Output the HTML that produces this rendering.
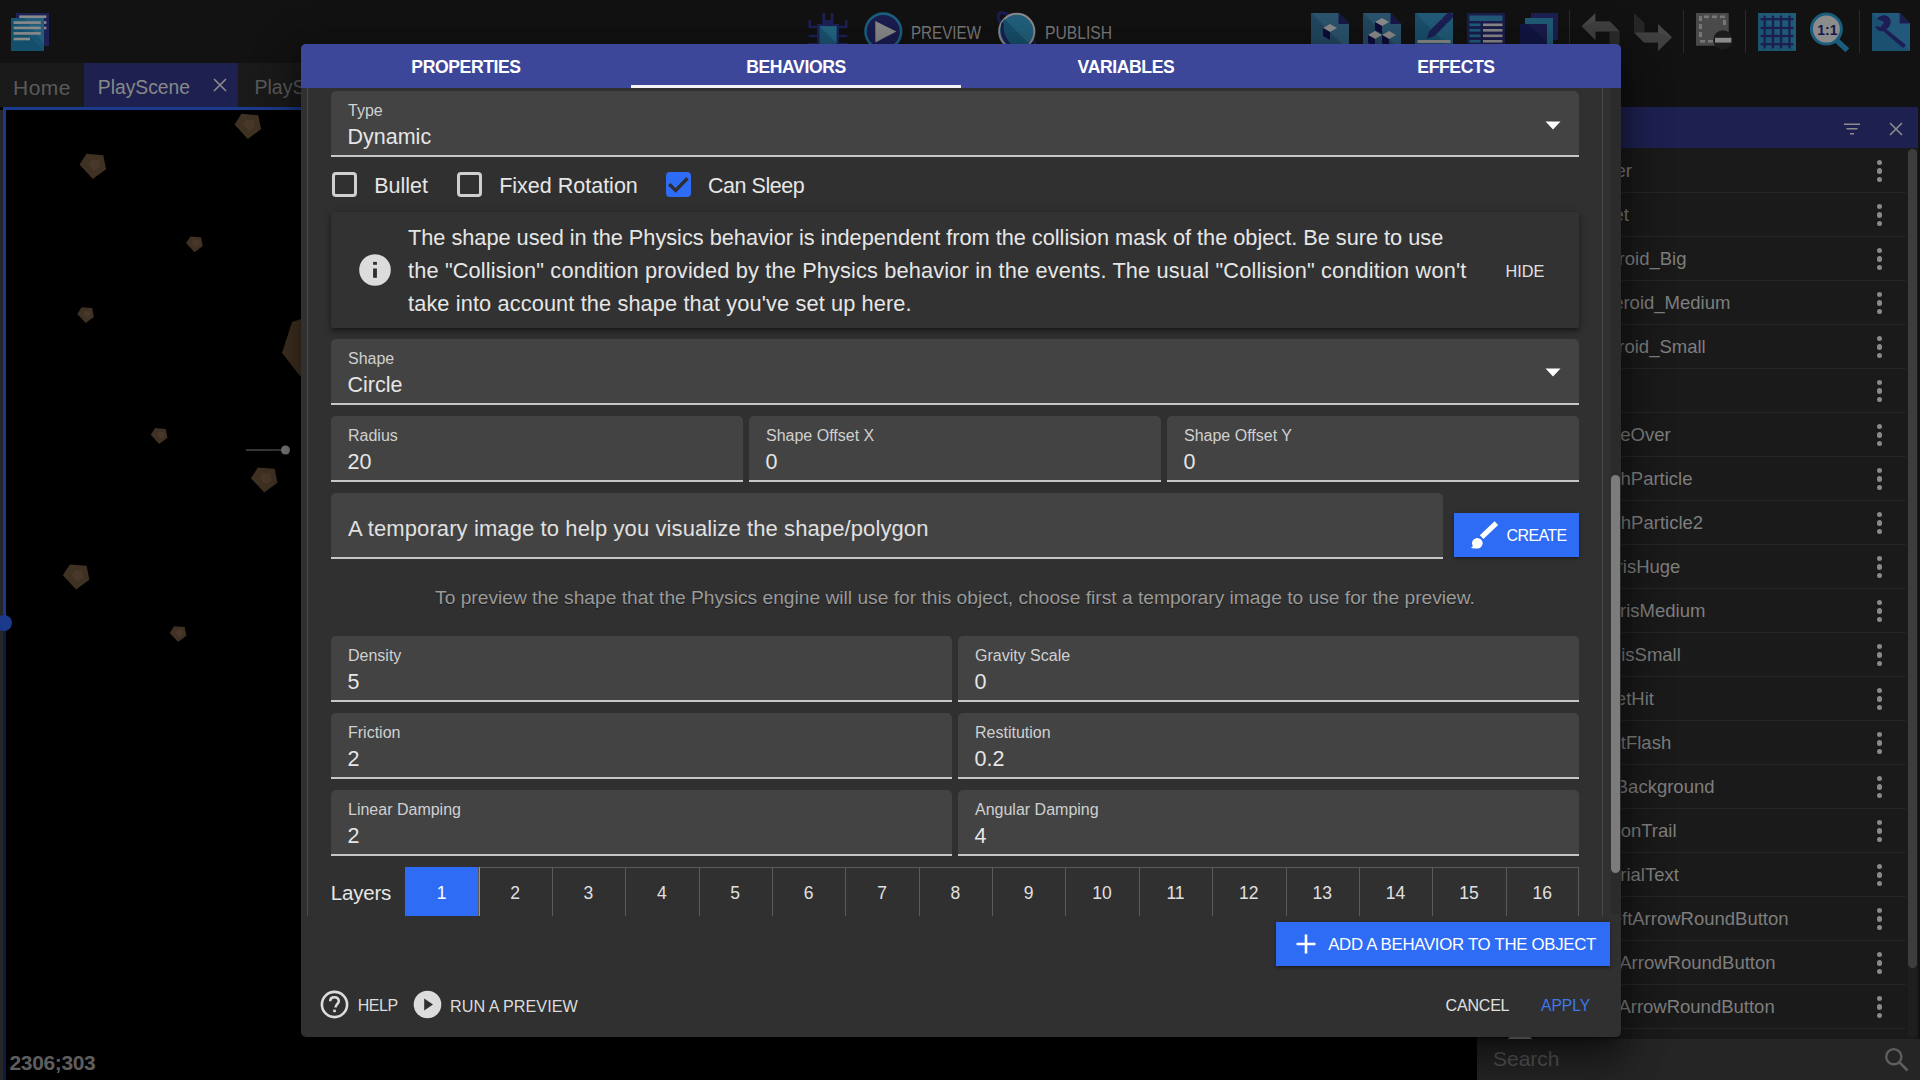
<!DOCTYPE html>
<html><head><meta charset="utf-8">
<style>
*{box-sizing:border-box;margin:0;padding:0}
html,body{width:1920px;height:1080px;overflow:hidden;background:#121212;font-family:"Liberation Sans",sans-serif}
.a{position:absolute}
.t{position:absolute;white-space:nowrap;line-height:1}
#dlg{background:#303030;border-radius:5px;overflow:hidden;box-shadow:0 11px 15px -7px rgba(0,0,0,.4),0 24px 38px 3px rgba(0,0,0,.28),0 9px 46px 8px rgba(0,0,0,.24)}
.fld{position:absolute;background:#434343;border-radius:5px 5px 0 0;border-bottom:2px solid #c6c6c6}
.btnb{position:absolute;background:#2f6cf5;box-shadow:0 1px 5px rgba(0,0,0,.2),0 2px 2px rgba(0,0,0,.14),0 3px 1px -2px rgba(0,0,0,.12)}
.cb{position:absolute;width:25px;height:25px;border:3px solid #cfcfcf;border-radius:4px}
</style></head><body>
<div class="a" style="left:0;top:0;width:1920px;height:63px;background:#121212"></div>
<svg class="a" style="left:0;top:0" width="1920" height="63" viewBox="0 0 1920 63">
 <!-- logo -->
 <rect x="16" y="13" width="33" height="33" fill="#1e2156"/>
 <rect x="19.2" y="15.4" width="27.2" height="2.6" fill="#8a8a8a"/>
 <rect x="44" y="21.2" width="2.4" height="2.6" fill="#8a8a8a"/>
 <rect x="44" y="26.7" width="2.4" height="2.6" fill="#8a8a8a"/>
 <rect x="11" y="18" width="33" height="33" fill="#175573"/>
 <polygon points="24,18 44,18 44,45" fill="#235f7c"/>
 <polygon points="11,18 44,51 11,51" fill="#134f6c"/>
 <rect x="13.6" y="21.3" width="27.2" height="2.6" fill="#8a8a8a"/>
 <rect x="13.6" y="26.6" width="27.2" height="2.6" fill="#8a8a8a"/>
 <rect x="13.6" y="32.1" width="27.2" height="2.6" fill="#8a8a8a"/>
 <rect x="13.6" y="37.7" width="16.4" height="2.6" fill="#8a8a8a"/>
 <!-- bug -->
 <g fill="#1d2258">
  <rect x="822.5" y="13" width="2.5" height="10"/><rect x="830.8" y="13" width="2.5" height="10"/>
  <rect x="822.5" y="20" width="10.8" height="6"/>
  <rect x="817" y="24" width="22" height="22"/>
  <rect x="808.5" y="25.8" width="10" height="2.4"/><rect x="837.5" y="25.8" width="10" height="2.4"/>
  <rect x="808.5" y="20" width="2.4" height="8"/><rect x="845.1" y="20" width="2.4" height="8"/>
  <rect x="808.5" y="34.8" width="10" height="2.4"/><rect x="837.5" y="34.8" width="10" height="2.4"/>
  <rect x="808.5" y="43" width="10" height="2.4"/><rect x="837.5" y="43" width="10" height="2.4"/>
 </g>
 <rect x="819.5" y="26.2" width="17" height="20" fill="#1b5572"/>
 <polygon points="819.5,26.2 836.5,26.2 836.5,43" fill="#246683"/>
 <!-- preview -->
 <circle cx="883.3" cy="31.4" r="17.8" fill="#1a1d4f" stroke="#1b6080" stroke-width="2.6"/>
 <polygon points="875.3,21 896.4,31.4 875.3,42.5" fill="#8a8a8a"/>
 <polygon points="886,36.2 896.4,31.4 875.3,42.5" fill="#6a6a70"/>
 <text x="911" y="38.75" font-family="Liberation Sans" font-size="17.6" fill="#7a7a7a" textLength="70" lengthAdjust="spacingAndGlyphs">PREVIEW</text>
 <!-- publish -->
 <ellipse cx="1016.8" cy="31.4" rx="25" ry="8" transform="rotate(45 1016.8 31.4)" fill="none" stroke="#1b1c55" stroke-width="3"/>
 <circle cx="1016.8" cy="31.4" r="17.6" fill="#22607c" stroke="#8a8a8a" stroke-width="2"/>
 <path d="M1004.4 19 L1029.2 43.8 A17.6 17.6 0 0 1 1004.4 19 Z" fill="#17506a"/>
 <path d="M1004 24 C1002 30 1006 40 1012 45 L1009 46 C1002 41 999 30 1002 22 Z" fill="#1b1c55"/>
 <text x="1045" y="38.75" font-family="Liberation Sans" font-size="17.6" fill="#7a7a7a" textLength="67" lengthAdjust="spacingAndGlyphs">PUBLISH</text>
 <!-- object icons -->
 <g id="pg1">
  <polygon points="1311,13 1338.5,13 1349,24 1349,51 1311,51" fill="#2b546e"/>
  <polygon points="1311,13 1349,51 1311,51" fill="#22475f"/>
  <polygon points="1338.5,13 1349,24 1338.5,24" fill="#16164a"/>
  <polygon points="1323,28 1330,24 1337,28 1330,32" fill="#8c8c8c"/>
  <polygon points="1323,28 1330,32 1330,40 1323,36" fill="#0e0d3c"/>
 </g>
 <polygon points="1363,13 1390.5,13 1401,24 1401,51 1363,51" fill="#2b546e"/>
 <polygon points="1363,13 1401,51 1363,51" fill="#22475f"/>
 <polygon points="1390.5,13 1401,24 1390.5,24" fill="#16164a"/>
 <polygon points="1375,22 1382,18 1389,22 1382,26" fill="#8c8c8c"/>
 <polygon points="1375,22 1382,26 1382,34 1375,30" fill="#0e0d3c"/>
 <polygon points="1368,35 1375,31 1382,35 1375,39" fill="#8c8c8c"/>
 <polygon points="1368,35 1375,39 1375,47 1368,43" fill="#0e0d3c"/>
 <polygon points="1382,35 1389,31 1396,35 1389,39" fill="#8c8c8c"/>
 <polygon points="1382,35 1389,39 1389,47 1382,43" fill="#0e0d3c"/>
 <!-- edit icon -->
 <rect x="1415" y="13" width="38" height="38" fill="#215b78"/>
 <polygon points="1415,13 1453,51 1415,51" fill="#1a4f6c"/>
 <path d="M1431.5 34 L1443.5 22" stroke="#1c1f55" stroke-width="7"/><path d="M1445.5 20 L1449.5 16" stroke="#1c1f55" stroke-width="7" stroke-linecap="round"/><path d="M1429 31.5 L1434 36.5 L1427 38.5 Z" fill="#1c1f55"/>
 <rect x="1417.5" y="40" width="33" height="3" fill="#8a8a8a"/>
 <!-- events sheet icon -->
 <rect x="1467" y="13" width="38" height="38" fill="#1b1d4e"/>
 <rect x="1469.5" y="15.5" width="33" height="5.5" fill="#225a77"/>
 <g fill="#1e607b"><rect x="1469.5" y="23.5" width="11" height="2.6"/><rect x="1469.5" y="29" width="11" height="2.6"/><rect x="1469.5" y="34.5" width="11" height="2.6"/><rect x="1469.5" y="40" width="11" height="2.6"/></g>
 <g fill="#8a8a8a"><rect x="1483" y="23.5" width="19.5" height="2.6"/><rect x="1483" y="29" width="19.5" height="2.6"/><rect x="1483" y="34.5" width="19.5" height="2.6"/><rect x="1483" y="40" width="19.5" height="2.6"/></g>
 <!-- layers icon -->
 <rect x="1531" y="13" width="27" height="27" fill="#1d1f52"/>
 <rect x="1525" y="18" width="28" height="30" fill="#1f5b77"/>
 <rect x="1520" y="24" width="27" height="24" fill="#121643"/>
 <polygon points="1528,24 1547,24 1547,42" fill="#1a1c4c"/>
 <!-- separators -->
 <rect x="1569" y="10" width="1" height="43" fill="#2a2a2a"/>
 <rect x="1683" y="10" width="1" height="43" fill="#2a2a2a"/>
 <rect x="1745" y="10" width="1" height="43" fill="#2a2a2a"/>
 <rect x="1859" y="10" width="1" height="43" fill="#2a2a2a"/>
 <!-- undo -->
 <polygon points="1581.6,26.3 1595.4,13 1595.4,21.4 1610,21.4 1619.7,31.6 1595.4,31.6 1595.4,40" fill="#474747"/>
 <polygon points="1609.5,31.6 1619.7,31.6 1619.7,44 1609.5,44" fill="#2b2b2b"/>
 <polygon points="1581.6,26.3 1595.4,40 1595.4,31.6 1619.7,31.6 1610,21.4 1595,21.4" fill="#3a3a3a" opacity="0.55"/>
 <!-- redo -->
 <polygon points="1634,13 1644.5,23 1644.5,32.5 1634,32.5" fill="#262626"/>
 <polygon points="1634,32.5 1658,32.5 1658,24 1672,37.3 1658,51 1658,42.6 1644,42.6" fill="#474747"/>
 <polygon points="1658,42.6 1644,42.6 1634,32.5 1658,32.5 1672,37.3 1658,51" fill="#3a3a3a" opacity="0.5"/>
 <!-- mask -->
 <rect x="1696" y="13" width="32.7" height="32.7" fill="#4a4a4a"/>
 <g fill="#777"><rect x="1699" y="16" width="3" height="5"/><rect x="1704" y="15.5" width="5" height="2.6"/><rect x="1712" y="15.5" width="5" height="2.6"/><rect x="1720" y="15.5" width="5" height="2.6"/>
 <rect x="1699" y="24" width="3" height="5"/><rect x="1699" y="32" width="3" height="5"/><rect x="1700" y="40" width="5" height="2.6"/><rect x="1708" y="40" width="5" height="2.6"/><rect x="1723" y="20" width="3" height="5"/></g>
 <circle cx="1722.9" cy="40" r="9.7" fill="#1c1c1c"/>
 <rect x="1715" y="37.8" width="16.3" height="4.8" fill="#8a8a8a"/>
 <!-- grid -->
 <rect x="1758" y="13" width="38" height="38" fill="#1f5b77"/>
 <polygon points="1758,13 1796,51 1758,51" fill="#1b5470"/>
 <g fill="#1c1e52"><rect x="1763.5" y="15.6" width="2.3" height="32.8"/><rect x="1771.8" y="15.6" width="2.3" height="32.8"/><rect x="1779.9" y="15.6" width="2.3" height="32.8"/><rect x="1788.3" y="15.6" width="2.3" height="32.8"/>
 <rect x="1760.6" y="18" width="32.8" height="2.3"/><rect x="1760.6" y="26.8" width="32.8" height="2.3"/><rect x="1760.6" y="34.9" width="32.8" height="2.3"/><rect x="1760.6" y="43.1" width="32.8" height="2.3"/></g>
 <!-- zoom 1:1 -->
 <path d="M1834 38 L1847.4 50.2" stroke="#1b5d7c" stroke-width="5.5"/>
 <circle cx="1826.4" cy="29.1" r="15" fill="#8c8c8c" stroke="#1b5d7c" stroke-width="3"/>
 <text x="1817.3" y="34.5" font-family="Liberation Sans" font-weight="bold" font-size="14" fill="#15174a">1:1</text>
 <!-- wrench page -->
 <polygon points="1872,13 1899.7,13 1910,23.6 1910,51 1872,51" fill="#22587a"/>
 <polygon points="1872,13 1910,51 1872,51" fill="#1c5070"/>
 <polygon points="1899.7,13 1910,23.6 1899.7,23.6" fill="#1c1e52"/>
 <path d="M1877 19 C1880 14 1888 14 1890 19 C1892 24 1889 28 1886 29 L1906 45 L1903 48 L1883 31 C1879 32 1876 29 1875 26 L1881 27 L1884 22 Z" fill="#1c1e55"/>
</svg>
<div class="a" style="left:0;top:63px;width:1477px;height:45px;background:#1a1a1a"></div>
<div class="a" style="left:84px;top:63px;width:154px;height:44px;background:#1e2150"></div>
<div class="t" style="left:13.0px;top:76.72px;font-size:21px;color:#5a5a5a;letter-spacing:0.5px">Home</div>
<div class="t" style="left:97.8px;top:78.16px;font-size:19.3px;color:#888888;">PlayScene</div>
<div class="t" style="left:254.5px;top:77.99px;font-size:19.5px;color:#5a5a5a;">PlayScene2</div>
<svg class="a" style="left:212px;top:77px" width="16" height="16" viewBox="0 0 16 16"><path d="M2 2L14 14M14 2L2 14" stroke="#8c8c8c" stroke-width="1.6"/></svg>
<div class="a" style="left:0;top:107px;width:1477px;height:973px;background:#000"></div>
<div class="a" style="left:0;top:110px;width:3px;height:970px;background:#262626"></div>
<div class="a" style="left:3px;top:107px;width:1474px;height:3px;background:#1b3a8c"></div>
<div class="a" style="left:3px;top:107px;width:3px;height:516px;background:#1b3a8c"></div>
<div class="a" style="left:3px;top:623px;width:3px;height:457px;background:#0d1b3f"></div>
<div class="a" style="left:-4px;top:615px;width:16px;height:16px;border-radius:50%;background:#1b3a8c"></div>
<svg class="a" style="left:0;top:0" width="310" height="1080" viewBox="0 0 310 1080">
 <defs><filter id="bl" x="-20%" y="-20%" width="140%" height="140%"><feGaussianBlur stdDeviation="0.7"/></filter></defs>
 <g filter="url(#bl)">
  <polygon points="241.5,113.8 258.3,115.2 261.1,129.2 247.8,139.0 234.5,124.6" fill="#3f3024"/>
  <polygon points="246.4,119.6 253.9,120.3 255.2,126.6 249.2,131.0 243.2,124.5" fill="#4a392b"/>
  <polygon points="86.5,153.8 103.3,155.2 106.1,169.2 92.8,179.0 79.5,164.6" fill="#3f3024"/>
  <polygon points="91.4,159.6 98.9,160.3 100.2,166.6 94.2,171.0 88.2,164.5" fill="#4a392b"/>
  <polygon points="190.5,236.4 201.1,237.2 202.8,246.0 194.5,252.2 186.1,243.1" fill="#3f3024"/>
  <polygon points="194.0,240.0 198.7,240.4 199.5,244.4 195.8,247.1 192.0,243.1" fill="#4a392b"/>
  <polygon points="81.6,307.3 92.2,308.1 93.9,316.9 85.6,323.1 77.2,314.0" fill="#3f3024"/>
  <polygon points="85.1,310.9 89.8,311.3 90.6,315.3 86.9,318.0 83.1,314.0" fill="#4a392b"/>
  <polygon points="155.2,428.1 165.8,428.9 167.5,437.7 159.2,443.9 150.8,434.8" fill="#3f3024"/>
  <polygon points="158.7,431.7 163.4,432.1 164.2,436.1 160.5,438.8 156.7,434.8" fill="#4a392b"/>
  <polygon points="257.9,467.4 274.7,468.8 277.5,482.8 264.2,492.6 250.9,478.2" fill="#3f3024"/>
  <polygon points="262.8,473.2 270.3,473.9 271.6,480.2 265.6,484.6 259.6,478.1" fill="#4a392b"/>
  <polygon points="69.8,564.4 86.6,565.8 89.4,579.8 76.1,589.6 62.8,575.2" fill="#3f3024"/>
  <polygon points="74.7,570.2 82.2,570.9 83.5,577.2 77.5,581.6 71.5,575.1" fill="#4a392b"/>
  <polygon points="174.1,626.2 184.7,627.0 186.4,635.8 178.1,642.0 169.7,632.9" fill="#3f3024"/>
  <polygon points="177.6,629.8 182.3,630.2 183.1,634.2 179.4,636.9 175.6,632.9" fill="#4a392b"/>
  <polygon points="292,322 310,316 310,376 300,376 282,353" fill="#3f3024"/>
 </g>
 <line x1="246" y1="450" x2="284" y2="450" stroke="#6f6f6f" stroke-width="1.2"/>
 <circle cx="285.5" cy="450" r="4.5" fill="#7a7a7a"/>
</svg>
<div class="t" style="left:9.5px;top:1051.8px;font-size:21px;font-weight:bold;color:#5e5e5e;letter-spacing:-0.35px">2306;303</div>
<div class="a" style="left:1477px;top:107px;width:441px;height:41px;background:#1e2150"></div>
<div class="a" style="left:1477px;top:148px;width:441px;height:891px;background:#1a1a1a"></div>
<div class="a" style="left:1918px;top:107px;width:2px;height:973px;background:#121212"></div>
<div class="a" style="left:1502px;top:1034px;width:36px;height:36px;border-radius:50%;background:#9a9a9a"></div>
<div class="a" style="left:1477px;top:1039px;width:443px;height:41px;background:#252525"></div>
<svg class="a" style="left:1843px;top:122px" width="18" height="14" viewBox="0 0 18 14"><path d="M1 2.3H17M3.5 6.8H14.5M7 11.7H11" stroke="#8c8c8c" stroke-width="1.6"/></svg>
<svg class="a" style="left:1889px;top:122px" width="14" height="14" viewBox="0 0 14 14"><path d="M1 1L13 13M13 1L1 13" stroke="#8c8c8c" stroke-width="1.6"/></svg>
<div class="a" style="left:1876.7px;top:159.9px;width:5.4px;height:5.4px;border-radius:50%;background:#8a8a8a"></div>
<div class="a" style="left:1876.7px;top:168.2px;width:5.4px;height:5.4px;border-radius:50%;background:#8a8a8a"></div>
<div class="a" style="left:1876.7px;top:176.5px;width:5.4px;height:5.4px;border-radius:50%;background:#8a8a8a"></div>
<div class="a" style="left:1620px;top:192px;width:286px;height:1px;background:#262626"></div>
<div class="a" style="left:1876.7px;top:203.9px;width:5.4px;height:5.4px;border-radius:50%;background:#8a8a8a"></div>
<div class="a" style="left:1876.7px;top:212.2px;width:5.4px;height:5.4px;border-radius:50%;background:#8a8a8a"></div>
<div class="a" style="left:1876.7px;top:220.5px;width:5.4px;height:5.4px;border-radius:50%;background:#8a8a8a"></div>
<div class="a" style="left:1620px;top:236px;width:286px;height:1px;background:#262626"></div>
<div class="a" style="left:1876.7px;top:247.9px;width:5.4px;height:5.4px;border-radius:50%;background:#8a8a8a"></div>
<div class="a" style="left:1876.7px;top:256.2px;width:5.4px;height:5.4px;border-radius:50%;background:#8a8a8a"></div>
<div class="a" style="left:1876.7px;top:264.5px;width:5.4px;height:5.4px;border-radius:50%;background:#8a8a8a"></div>
<div class="a" style="left:1620px;top:280px;width:286px;height:1px;background:#262626"></div>
<div class="a" style="left:1876.7px;top:291.9px;width:5.4px;height:5.4px;border-radius:50%;background:#8a8a8a"></div>
<div class="a" style="left:1876.7px;top:300.2px;width:5.4px;height:5.4px;border-radius:50%;background:#8a8a8a"></div>
<div class="a" style="left:1876.7px;top:308.5px;width:5.4px;height:5.4px;border-radius:50%;background:#8a8a8a"></div>
<div class="a" style="left:1620px;top:324px;width:286px;height:1px;background:#262626"></div>
<div class="a" style="left:1876.7px;top:335.9px;width:5.4px;height:5.4px;border-radius:50%;background:#8a8a8a"></div>
<div class="a" style="left:1876.7px;top:344.2px;width:5.4px;height:5.4px;border-radius:50%;background:#8a8a8a"></div>
<div class="a" style="left:1876.7px;top:352.5px;width:5.4px;height:5.4px;border-radius:50%;background:#8a8a8a"></div>
<div class="a" style="left:1620px;top:368px;width:286px;height:1px;background:#262626"></div>
<div class="a" style="left:1876.7px;top:379.9px;width:5.4px;height:5.4px;border-radius:50%;background:#8a8a8a"></div>
<div class="a" style="left:1876.7px;top:388.2px;width:5.4px;height:5.4px;border-radius:50%;background:#8a8a8a"></div>
<div class="a" style="left:1876.7px;top:396.5px;width:5.4px;height:5.4px;border-radius:50%;background:#8a8a8a"></div>
<div class="a" style="left:1620px;top:412px;width:286px;height:1px;background:#262626"></div>
<div class="a" style="left:1876.7px;top:423.9px;width:5.4px;height:5.4px;border-radius:50%;background:#8a8a8a"></div>
<div class="a" style="left:1876.7px;top:432.2px;width:5.4px;height:5.4px;border-radius:50%;background:#8a8a8a"></div>
<div class="a" style="left:1876.7px;top:440.5px;width:5.4px;height:5.4px;border-radius:50%;background:#8a8a8a"></div>
<div class="a" style="left:1620px;top:456px;width:286px;height:1px;background:#262626"></div>
<div class="a" style="left:1876.7px;top:467.9px;width:5.4px;height:5.4px;border-radius:50%;background:#8a8a8a"></div>
<div class="a" style="left:1876.7px;top:476.2px;width:5.4px;height:5.4px;border-radius:50%;background:#8a8a8a"></div>
<div class="a" style="left:1876.7px;top:484.5px;width:5.4px;height:5.4px;border-radius:50%;background:#8a8a8a"></div>
<div class="a" style="left:1620px;top:500px;width:286px;height:1px;background:#262626"></div>
<div class="a" style="left:1876.7px;top:511.9px;width:5.4px;height:5.4px;border-radius:50%;background:#8a8a8a"></div>
<div class="a" style="left:1876.7px;top:520.2px;width:5.4px;height:5.4px;border-radius:50%;background:#8a8a8a"></div>
<div class="a" style="left:1876.7px;top:528.5px;width:5.4px;height:5.4px;border-radius:50%;background:#8a8a8a"></div>
<div class="a" style="left:1620px;top:544px;width:286px;height:1px;background:#262626"></div>
<div class="a" style="left:1876.7px;top:555.9px;width:5.4px;height:5.4px;border-radius:50%;background:#8a8a8a"></div>
<div class="a" style="left:1876.7px;top:564.2px;width:5.4px;height:5.4px;border-radius:50%;background:#8a8a8a"></div>
<div class="a" style="left:1876.7px;top:572.5px;width:5.4px;height:5.4px;border-radius:50%;background:#8a8a8a"></div>
<div class="a" style="left:1620px;top:588px;width:286px;height:1px;background:#262626"></div>
<div class="a" style="left:1876.7px;top:599.9px;width:5.4px;height:5.4px;border-radius:50%;background:#8a8a8a"></div>
<div class="a" style="left:1876.7px;top:608.2px;width:5.4px;height:5.4px;border-radius:50%;background:#8a8a8a"></div>
<div class="a" style="left:1876.7px;top:616.5px;width:5.4px;height:5.4px;border-radius:50%;background:#8a8a8a"></div>
<div class="a" style="left:1620px;top:632px;width:286px;height:1px;background:#262626"></div>
<div class="a" style="left:1876.7px;top:643.9px;width:5.4px;height:5.4px;border-radius:50%;background:#8a8a8a"></div>
<div class="a" style="left:1876.7px;top:652.2px;width:5.4px;height:5.4px;border-radius:50%;background:#8a8a8a"></div>
<div class="a" style="left:1876.7px;top:660.5px;width:5.4px;height:5.4px;border-radius:50%;background:#8a8a8a"></div>
<div class="a" style="left:1620px;top:676px;width:286px;height:1px;background:#262626"></div>
<div class="a" style="left:1876.7px;top:687.9px;width:5.4px;height:5.4px;border-radius:50%;background:#8a8a8a"></div>
<div class="a" style="left:1876.7px;top:696.2px;width:5.4px;height:5.4px;border-radius:50%;background:#8a8a8a"></div>
<div class="a" style="left:1876.7px;top:704.5px;width:5.4px;height:5.4px;border-radius:50%;background:#8a8a8a"></div>
<div class="a" style="left:1620px;top:720px;width:286px;height:1px;background:#262626"></div>
<div class="a" style="left:1876.7px;top:731.9px;width:5.4px;height:5.4px;border-radius:50%;background:#8a8a8a"></div>
<div class="a" style="left:1876.7px;top:740.2px;width:5.4px;height:5.4px;border-radius:50%;background:#8a8a8a"></div>
<div class="a" style="left:1876.7px;top:748.5px;width:5.4px;height:5.4px;border-radius:50%;background:#8a8a8a"></div>
<div class="a" style="left:1620px;top:764px;width:286px;height:1px;background:#262626"></div>
<div class="a" style="left:1876.7px;top:775.9px;width:5.4px;height:5.4px;border-radius:50%;background:#8a8a8a"></div>
<div class="a" style="left:1876.7px;top:784.2px;width:5.4px;height:5.4px;border-radius:50%;background:#8a8a8a"></div>
<div class="a" style="left:1876.7px;top:792.5px;width:5.4px;height:5.4px;border-radius:50%;background:#8a8a8a"></div>
<div class="a" style="left:1620px;top:808px;width:286px;height:1px;background:#262626"></div>
<div class="a" style="left:1876.7px;top:819.9px;width:5.4px;height:5.4px;border-radius:50%;background:#8a8a8a"></div>
<div class="a" style="left:1876.7px;top:828.2px;width:5.4px;height:5.4px;border-radius:50%;background:#8a8a8a"></div>
<div class="a" style="left:1876.7px;top:836.5px;width:5.4px;height:5.4px;border-radius:50%;background:#8a8a8a"></div>
<div class="a" style="left:1620px;top:852px;width:286px;height:1px;background:#262626"></div>
<div class="a" style="left:1876.7px;top:863.9px;width:5.4px;height:5.4px;border-radius:50%;background:#8a8a8a"></div>
<div class="a" style="left:1876.7px;top:872.2px;width:5.4px;height:5.4px;border-radius:50%;background:#8a8a8a"></div>
<div class="a" style="left:1876.7px;top:880.5px;width:5.4px;height:5.4px;border-radius:50%;background:#8a8a8a"></div>
<div class="a" style="left:1620px;top:896px;width:286px;height:1px;background:#262626"></div>
<div class="a" style="left:1876.7px;top:907.9px;width:5.4px;height:5.4px;border-radius:50%;background:#8a8a8a"></div>
<div class="a" style="left:1876.7px;top:916.2px;width:5.4px;height:5.4px;border-radius:50%;background:#8a8a8a"></div>
<div class="a" style="left:1876.7px;top:924.5px;width:5.4px;height:5.4px;border-radius:50%;background:#8a8a8a"></div>
<div class="a" style="left:1620px;top:940px;width:286px;height:1px;background:#262626"></div>
<div class="a" style="left:1876.7px;top:951.9px;width:5.4px;height:5.4px;border-radius:50%;background:#8a8a8a"></div>
<div class="a" style="left:1876.7px;top:960.2px;width:5.4px;height:5.4px;border-radius:50%;background:#8a8a8a"></div>
<div class="a" style="left:1876.7px;top:968.5px;width:5.4px;height:5.4px;border-radius:50%;background:#8a8a8a"></div>
<div class="a" style="left:1620px;top:984px;width:286px;height:1px;background:#262626"></div>
<div class="a" style="left:1876.7px;top:995.9px;width:5.4px;height:5.4px;border-radius:50%;background:#8a8a8a"></div>
<div class="a" style="left:1876.7px;top:1004.2px;width:5.4px;height:5.4px;border-radius:50%;background:#8a8a8a"></div>
<div class="a" style="left:1876.7px;top:1012.5px;width:5.4px;height:5.4px;border-radius:50%;background:#8a8a8a"></div>
<div class="a" style="left:1620px;top:1028px;width:286px;height:1px;background:#262626"></div>
<div class="t" style="left:1232.0px;width:400px;text-align:right;top:161.8px;font-size:18.5px;color:#7e7e7e">Player</div>
<div class="t" style="left:1229.0px;width:400px;text-align:right;top:205.8px;font-size:18.5px;color:#7e7e7e">Bullet</div>
<div class="t" style="left:1286.5px;width:400px;text-align:right;top:249.8px;font-size:18.5px;color:#7e7e7e">Asteroid_Big</div>
<div class="t" style="left:1330.4px;width:400px;text-align:right;top:293.8px;font-size:18.5px;color:#7e7e7e">Asteroid_Medium</div>
<div class="t" style="left:1305.7px;width:400px;text-align:right;top:337.8px;font-size:18.5px;color:#7e7e7e">Asteroid_Small</div>
<div class="t" style="left:1270.7px;width:400px;text-align:right;top:425.8px;font-size:18.5px;color:#7e7e7e">GameOver</div>
<div class="t" style="left:1292.5px;width:400px;text-align:right;top:469.8px;font-size:18.5px;color:#7e7e7e">FlashParticle</div>
<div class="t" style="left:1303.1px;width:400px;text-align:right;top:513.8px;font-size:18.5px;color:#7e7e7e">FlashParticle2</div>
<div class="t" style="left:1280.4px;width:400px;text-align:right;top:557.8px;font-size:18.5px;color:#7e7e7e">DebrisHuge</div>
<div class="t" style="left:1305.4px;width:400px;text-align:right;top:601.8px;font-size:18.5px;color:#7e7e7e">DebrisMedium</div>
<div class="t" style="left:1280.8px;width:400px;text-align:right;top:645.8px;font-size:18.5px;color:#7e7e7e">DebrisSmall</div>
<div class="t" style="left:1253.9px;width:400px;text-align:right;top:689.8px;font-size:18.5px;color:#7e7e7e">BulletHit</div>
<div class="t" style="left:1271.2px;width:400px;text-align:right;top:733.8px;font-size:18.5px;color:#7e7e7e">BulletFlash</div>
<div class="t" style="left:1314.5px;width:400px;text-align:right;top:777.8px;font-size:18.5px;color:#7e7e7e">Background</div>
<div class="t" style="left:1276.5px;width:400px;text-align:right;top:821.8px;font-size:18.5px;color:#7e7e7e">ExplosionTrail</div>
<div class="t" style="left:1278.9px;width:400px;text-align:right;top:865.8px;font-size:18.5px;color:#7e7e7e">TutorialText</div>
<div class="t" style="left:1388.6px;width:400px;text-align:right;top:909.8px;font-size:18.5px;color:#7e7e7e">LeftArrowRoundButton</div>
<div class="t" style="left:1375.6px;width:400px;text-align:right;top:953.8px;font-size:18.5px;color:#7e7e7e">RightArrowRoundButton</div>
<div class="t" style="left:1374.7px;width:400px;text-align:right;top:997.8px;font-size:18.5px;color:#7e7e7e">ShootArrowRoundButton</div>
<div class="a" style="left:1908px;top:149px;width:9px;height:889px;background:#1e1e1e;border-radius:5px"></div>
<div class="a" style="left:1908px;top:149px;width:9px;height:819px;background:#3d3d3d;border-radius:5px"></div>
<div class="t" style="left:1493px;top:1048px;font-size:21px;color:#555555">Search</div>
<svg class="a" style="left:1882px;top:1045px" width="30" height="30" viewBox="0 0 30 30"><circle cx="11.8" cy="11.7" r="7.6" fill="none" stroke="#5e5e5e" stroke-width="2.4"/><path d="M17.5 17.4L25.5 25.5" stroke="#5e5e5e" stroke-width="2.6"/></svg>
<div id="dlg" class="a" style="left:301px;top:44px;width:1320px;height:993px">
<div class="a" style="left:0;top:0;width:1320px;height:44px;background:#3d4799"></div>
<div class="t" style="left:0.0px;top:15.10px;width:330px;text-align:center;font-size:17.6px;color:#ffffff;font-weight:bold;letter-spacing:-0.4px">PROPERTIES</div>
<div class="t" style="left:330.0px;top:15.10px;width:330px;text-align:center;font-size:17.6px;color:#ffffff;font-weight:bold;letter-spacing:-0.4px">BEHAVIORS</div>
<div class="t" style="left:660.0px;top:15.10px;width:330px;text-align:center;font-size:17.6px;color:#ffffff;font-weight:bold;letter-spacing:-0.4px">VARIABLES</div>
<div class="t" style="left:990.0px;top:15.10px;width:330px;text-align:center;font-size:17.6px;color:#ffffff;font-weight:bold;letter-spacing:-0.4px">EFFECTS</div>
<div class="a" style="left:330px;top:41px;width:330px;height:3px;background:#f4f4f4"></div>
<div class="a" style="left:6px;top:44px;width:1px;height:828px;background:#4a4a4a"></div>
<div class="a" style="left:1301px;top:44px;width:1px;height:828px;background:#4a4a4a"></div>
<div class="a" style="left:1310px;top:44px;width:10px;height:827px;background:#2b2b2b;border-radius:0 0 5px 5px"></div>
<div class="a" style="left:1310px;top:431px;width:9px;height:398px;background:#7c7c7c;border-radius:5px"></div>
<div class="fld" style="left:30px;top:47px;width:1248px;height:66px"></div>
<div class="t" style="left:47.0px;top:59.46px;font-size:16px;color:#d0d0d0;">Type</div>
<div class="t" style="left:46.5px;top:82.80px;font-size:21.5px;color:#e6e6e6;">Dynamic</div>
<svg class="a" style="left:1244.4px;top:77px" width="16" height="9" viewBox="0 0 16 9"><path d="M0.5 0.5H15.5L8 8.5Z" fill="#ffffff"/></svg>
<div class="cb" style="left:31px;top:128px"></div>
<div class="t" style="left:73.2px;top:131.50px;font-size:21.5px;color:#e6e6e6;">Bullet</div>
<div class="cb" style="left:156px;top:128px"></div>
<div class="t" style="left:198.2px;top:131.50px;font-size:21.5px;color:#e6e6e6;">Fixed Rotation</div>
<div class="a" style="left:365px;top:128px;width:25px;height:25px;background:#2f6cf5;border-radius:4px"></div>
<svg class="a" style="left:365px;top:128px" width="25" height="25" viewBox="0 0 25 25"><path d="M3.2 12.2L9.7 18.4L21.5 6.3" fill="none" stroke="#2e2e2e" stroke-width="3.4"/></svg>
<div class="t" style="left:406.9px;top:131.50px;font-size:21.5px;color:#e6e6e6;letter-spacing:-0.45px">Can Sleep</div>
<div class="a" style="left:30px;top:168px;width:1248px;height:116px;background:#323232;border-radius:2px;box-shadow:0 2px 4px -1px rgba(0,0,0,.3),0 4px 5px 0 rgba(0,0,0,.2),0 1px 10px 0 rgba(0,0,0,.16)"></div>
<svg class="a" style="left:58px;top:210px" width="32" height="32" viewBox="0 0 32 32"><circle cx="16" cy="16" r="15.8" fill="#dcdcdc"/><rect x="14.1" y="14.5" width="3.8" height="9.3" fill="#2e2e2e"/><rect x="14.1" y="7.9" width="3.8" height="2.9" fill="#2e2e2e"/></svg>
<div class="t" style="left:107.0px;top:182.89px;font-size:21.75px;color:#e6e6e6;letter-spacing:-0.02px">The shape used in the Physics behavior is independent from the collision mask of the object. Be sure to use</div>
<div class="t" style="left:107.0px;top:215.89px;font-size:21.75px;color:#e6e6e6;letter-spacing:0.15px">the &quot;Collision&quot; condition provided by the Physics behavior in the events. The usual &quot;Collision&quot; condition won't</div>
<div class="t" style="left:107.0px;top:248.89px;font-size:21.75px;color:#e6e6e6;letter-spacing:0.12px">take into account the shape that you've set up here.</div>
<div class="t" style="left:1204.5px;top:219.20px;font-size:16.3px;color:#e0e0e0;">HIDE</div>
<div class="fld" style="left:30px;top:295px;width:1248px;height:66px"></div>
<div class="t" style="left:47.0px;top:307.46px;font-size:16px;color:#d0d0d0;">Shape</div>
<div class="t" style="left:46.5px;top:330.80px;font-size:21.5px;color:#e6e6e6;">Circle</div>
<svg class="a" style="left:1244.4px;top:324px" width="16" height="9" viewBox="0 0 16 9"><path d="M0.5 0.5H15.5L8 8.5Z" fill="#ffffff"/></svg>
<div class="fld" style="left:30px;top:372px;width:412px;height:66px"></div>
<div class="t" style="left:47.0px;top:384.46px;font-size:16px;color:#d0d0d0;">Radius</div>
<div class="t" style="left:46.5px;top:407.80px;font-size:21.5px;color:#e6e6e6;">20</div>
<div class="fld" style="left:448px;top:372px;width:412px;height:66px"></div>
<div class="t" style="left:465.0px;top:384.46px;font-size:16px;color:#d0d0d0;">Shape Offset X</div>
<div class="t" style="left:464.5px;top:407.80px;font-size:21.5px;color:#e6e6e6;">0</div>
<div class="fld" style="left:866px;top:372px;width:412px;height:66px"></div>
<div class="t" style="left:883.0px;top:384.46px;font-size:16px;color:#d0d0d0;">Shape Offset Y</div>
<div class="t" style="left:882.5px;top:407.80px;font-size:21.5px;color:#e6e6e6;">0</div>
<div class="fld" style="left:30px;top:449px;width:1112px;height:66px"></div>
<div class="t" style="left:47.0px;top:473.88px;font-size:22px;color:#e0e0e0;letter-spacing:0.1px">A temporary image to help you visualize the shape/polygon</div>
<div class="btnb" style="left:1153px;top:469px;width:125px;height:44px"></div>
<svg class="a" style="left:1168px;top:477px" width="30" height="30" viewBox="0 0 30 30"><path d="M12.6 16.2L27.4 2.2" stroke="#fff" stroke-width="5.2"/><circle cx="8.3" cy="22.3" r="5.3" fill="#fff"/><path d="M1.8 26.6C4 26 4.5 24 4.8 21.5L9 26.8C6.5 28 3.5 27.8 1.8 26.6Z" fill="#fff"/></svg>
<div class="t" style="left:1205.5px;top:484.46px;font-size:16px;color:#ffffff;letter-spacing:-0.6px">CREATE</div>
<div class="t" style="left:30.0px;top:543.75px;width:1248px;text-align:center;font-size:19.2px;color:#9a9a9a;text-shadow:0 1px 1px rgba(0,0,0,.5)">To preview the shape that the Physics engine will use for this object, choose first a temporary image to use for the preview.</div>
<div class="fld" style="left:30px;top:592px;width:621px;height:66px"></div>
<div class="t" style="left:47.0px;top:604.46px;font-size:16px;color:#d0d0d0;">Density</div>
<div class="t" style="left:46.5px;top:627.80px;font-size:21.5px;color:#e6e6e6;">5</div>
<div class="fld" style="left:657px;top:592px;width:621px;height:66px"></div>
<div class="t" style="left:674.0px;top:604.46px;font-size:16px;color:#d0d0d0;">Gravity Scale</div>
<div class="t" style="left:673.5px;top:627.80px;font-size:21.5px;color:#e6e6e6;">0</div>
<div class="fld" style="left:30px;top:669px;width:621px;height:66px"></div>
<div class="t" style="left:47.0px;top:681.46px;font-size:16px;color:#d0d0d0;">Friction</div>
<div class="t" style="left:46.5px;top:704.80px;font-size:21.5px;color:#e6e6e6;">2</div>
<div class="fld" style="left:657px;top:669px;width:621px;height:66px"></div>
<div class="t" style="left:674.0px;top:681.46px;font-size:16px;color:#d0d0d0;">Restitution</div>
<div class="t" style="left:673.5px;top:704.80px;font-size:21.5px;color:#e6e6e6;">0.2</div>
<div class="fld" style="left:30px;top:746px;width:621px;height:66px"></div>
<div class="t" style="left:47.0px;top:758.46px;font-size:16px;color:#d0d0d0;">Linear Damping</div>
<div class="t" style="left:46.5px;top:781.80px;font-size:21.5px;color:#e6e6e6;">2</div>
<div class="fld" style="left:657px;top:746px;width:621px;height:66px"></div>
<div class="t" style="left:674.0px;top:758.46px;font-size:16px;color:#d0d0d0;">Angular Damping</div>
<div class="t" style="left:673.5px;top:781.80px;font-size:21.5px;color:#e6e6e6;">4</div>
<div class="t" style="left:29.8px;top:838.65px;font-size:20.5px;color:#e6e6e6;letter-spacing:-0.2px">Layers</div>
<div class="a" style="left:104px;top:823px;width:1174px;height:49px;border-top:1px solid #5a5a5a;border-right:1px solid #5a5a5a"></div>
<div class="a" style="left:104.00px;top:823px;width:75px;height:49px;background:#2f6cf5;border-right:2px solid #6a95f5"></div>
<div class="t" style="left:105.7px;top:840.69px;width:70px;text-align:center;font-size:17.5px;color:#ffffff;">1</div>
<div class="a" style="left:177.38px;top:823px;width:1px;height:49px;background:#5a5a5a"></div>
<div class="t" style="left:179.1px;top:840.69px;width:70px;text-align:center;font-size:17.5px;color:#e0e0e0;">2</div>
<div class="a" style="left:250.75px;top:823px;width:1px;height:49px;background:#5a5a5a"></div>
<div class="t" style="left:252.4px;top:840.69px;width:70px;text-align:center;font-size:17.5px;color:#e0e0e0;">3</div>
<div class="a" style="left:324.12px;top:823px;width:1px;height:49px;background:#5a5a5a"></div>
<div class="t" style="left:325.8px;top:840.69px;width:70px;text-align:center;font-size:17.5px;color:#e0e0e0;">4</div>
<div class="a" style="left:397.50px;top:823px;width:1px;height:49px;background:#5a5a5a"></div>
<div class="t" style="left:399.2px;top:840.69px;width:70px;text-align:center;font-size:17.5px;color:#e0e0e0;">5</div>
<div class="a" style="left:470.88px;top:823px;width:1px;height:49px;background:#5a5a5a"></div>
<div class="t" style="left:472.6px;top:840.69px;width:70px;text-align:center;font-size:17.5px;color:#e0e0e0;">6</div>
<div class="a" style="left:544.25px;top:823px;width:1px;height:49px;background:#5a5a5a"></div>
<div class="t" style="left:546.0px;top:840.69px;width:70px;text-align:center;font-size:17.5px;color:#e0e0e0;">7</div>
<div class="a" style="left:617.62px;top:823px;width:1px;height:49px;background:#5a5a5a"></div>
<div class="t" style="left:619.3px;top:840.69px;width:70px;text-align:center;font-size:17.5px;color:#e0e0e0;">8</div>
<div class="a" style="left:691.00px;top:823px;width:1px;height:49px;background:#5a5a5a"></div>
<div class="t" style="left:692.7px;top:840.69px;width:70px;text-align:center;font-size:17.5px;color:#e0e0e0;">9</div>
<div class="a" style="left:764.38px;top:823px;width:1px;height:49px;background:#5a5a5a"></div>
<div class="t" style="left:766.1px;top:840.69px;width:70px;text-align:center;font-size:17.5px;color:#e0e0e0;">10</div>
<div class="a" style="left:837.75px;top:823px;width:1px;height:49px;background:#5a5a5a"></div>
<div class="t" style="left:839.5px;top:840.69px;width:70px;text-align:center;font-size:17.5px;color:#e0e0e0;">11</div>
<div class="a" style="left:911.12px;top:823px;width:1px;height:49px;background:#5a5a5a"></div>
<div class="t" style="left:912.8px;top:840.69px;width:70px;text-align:center;font-size:17.5px;color:#e0e0e0;">12</div>
<div class="a" style="left:984.50px;top:823px;width:1px;height:49px;background:#5a5a5a"></div>
<div class="t" style="left:986.2px;top:840.69px;width:70px;text-align:center;font-size:17.5px;color:#e0e0e0;">13</div>
<div class="a" style="left:1057.88px;top:823px;width:1px;height:49px;background:#5a5a5a"></div>
<div class="t" style="left:1059.6px;top:840.69px;width:70px;text-align:center;font-size:17.5px;color:#e0e0e0;">14</div>
<div class="a" style="left:1131.25px;top:823px;width:1px;height:49px;background:#5a5a5a"></div>
<div class="t" style="left:1133.0px;top:840.69px;width:70px;text-align:center;font-size:17.5px;color:#e0e0e0;">15</div>
<div class="a" style="left:1204.62px;top:823px;width:1px;height:49px;background:#5a5a5a"></div>
<div class="t" style="left:1206.3px;top:840.69px;width:70px;text-align:center;font-size:17.5px;color:#e0e0e0;">16</div>
<div class="btnb" style="left:975px;top:878px;width:334px;height:44px"></div>
<svg class="a" style="left:995px;top:890px" width="20" height="20" viewBox="0 0 20 20"><path d="M10 0.5V19.5M0.5 10H19.5" stroke="#fff" stroke-width="2.6"/></svg>
<div class="t" style="left:1027.2px;top:892.78px;font-size:16.8px;color:#ffffff;letter-spacing:-0.28px">ADD A BEHAVIOR TO THE OBJECT</div>
<svg class="a" style="left:19px;top:946px" width="29" height="29" viewBox="0 0 29 29"><circle cx="14.5" cy="14.5" r="12.6" fill="none" stroke="#dcdcdc" stroke-width="2.6"/><path d="M10.2 11.3C10.2 8.6 12.1 7.2 14.5 7.2C16.9 7.2 18.8 8.7 18.8 11C18.8 14 15.5 14.2 15.5 17.6" fill="none" stroke="#dcdcdc" stroke-width="2.6"/><rect x="13.2" y="19.6" width="2.6" height="2.6" fill="#dcdcdc"/></svg>
<div class="t" style="left:56.7px;top:953.96px;font-size:16px;color:#dcdcdc;letter-spacing:-0.4px">HELP</div>
<svg class="a" style="left:112px;top:946px" width="29" height="29" viewBox="0 0 29 29"><circle cx="14.5" cy="14.5" r="13.8" fill="#dcdcdc"/><path d="M11.2 8.6L20 14.5L11.2 20.4Z" fill="#303030"/></svg>
<div class="t" style="left:149.0px;top:953.79px;font-size:16.2px;color:#dcdcdc;">RUN A PREVIEW</div>
<div class="t" style="left:1144.6px;top:953.96px;font-size:16px;color:#e0e0e0;letter-spacing:-0.2px">CANCEL</div>
<div class="t" style="left:1240.0px;top:954.29px;font-size:15.6px;color:#3f78ec;">APPLY</div>
</div>
</body></html>
